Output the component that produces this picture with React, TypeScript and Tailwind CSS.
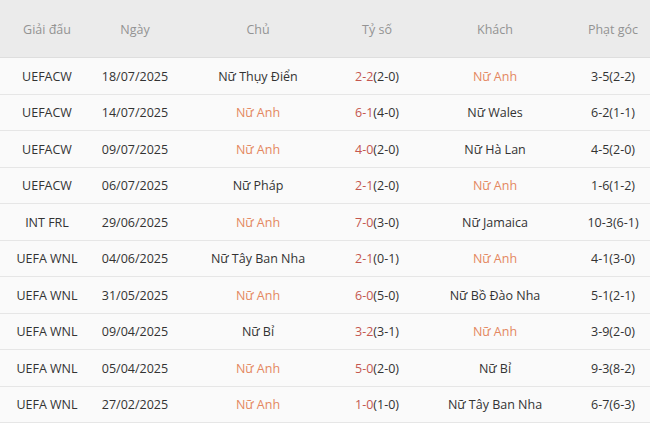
const rows = [
  { league: 'UEFACW', date: '18/07/2025', home: 'Nữ Thụy Điển', ft: '2-2', ht: '(2-0)', away: 'Nữ Anh', corner: '3-5(2-2)' },
  { league: 'UEFACW', date: '14/07/2025', home: 'Nữ Anh', ft: '6-1', ht: '(4-0)', away: 'Nữ Wales', corner: '6-2(1-1)' },
  { league: 'UEFACW', date: '09/07/2025', home: 'Nữ Anh', ft: '4-0', ht: '(2-0)', away: 'Nữ Hà Lan', corner: '4-5(2-0)' },
  { league: 'UEFACW', date: '06/07/2025', home: 'Nữ Pháp', ft: '2-1', ht: '(2-0)', away: 'Nữ Anh', corner: '1-6(1-2)' },
  { league: 'INT FRL', date: '29/06/2025', home: 'Nữ Anh', ft: '7-0', ht: '(3-0)', away: 'Nữ Jamaica', corner: '10-3(6-1)' },
  { league: 'UEFA WNL', date: '04/06/2025', home: 'Nữ Tây Ban Nha', ft: '2-1', ht: '(0-1)', away: 'Nữ Anh', corner: '4-1(3-0)' },
  { league: 'UEFA WNL', date: '31/05/2025', home: 'Nữ Anh', ft: '6-0', ht: '(5-0)', away: 'Nữ Bồ Đào Nha', corner: '5-1(2-1)' },
  { league: 'UEFA WNL', date: '09/04/2025', home: 'Nữ Bỉ', ft: '3-2', ht: '(3-1)', away: 'Nữ Anh', corner: '3-9(2-0)' },
  { league: 'UEFA WNL', date: '05/04/2025', home: 'Nữ Anh', ft: '5-0', ht: '(2-0)', away: 'Nữ Bỉ', corner: '9-3(8-2)' },
  { league: 'UEFA WNL', date: '27/02/2025', home: 'Nữ Anh', ft: '1-0', ht: '(1-0)', away: 'Nữ Tây Ban Nha', corner: '6-7(6-3)' },
]

function Team({ name }: { name: string }) {
  return <span className={name === 'Nữ Anh' ? 'text-[#e4875f]' : 'text-[#333]'}>{name}</span>
}

export default function App() {
  return (
    <div className="h-[428px] w-[650px] bg-white text-[12.5px] font-['Open_Sans',sans-serif]">
      <div className="flex h-[58px] items-center border-b border-[#dedede] bg-[#ebebeb] pt-[3px] text-[#939393]">
        <div className="w-[94px] text-center">Giải đấu</div>
        <div className="w-[82px] text-center">Ngày</div>
        <div className="w-[164px] text-center">Chủ</div>
        <div className="w-[74px] text-center">Tỷ số</div>
        <div className="w-[162px] text-center">Khách</div>
        <div className="w-[74px] text-center">Phạt góc</div>
      </div>
      {rows.map((r) => (
        <div key={r.date} className="flex h-[36.5px] items-center border-b border-[#e6e6e6] bg-[#fafafa] pt-[3px] text-[#333]">
          <div className="w-[94px] text-center">{r.league}</div>
          <div className="w-[82px] text-center">{r.date}</div>
          <div className="w-[164px] text-center"><Team name={r.home} /></div>
          <div className="w-[74px] text-center">
            <span className="text-[#c4574f]">{r.ft}</span>
            {r.ht}
          </div>
          <div className="w-[162px] text-center"><Team name={r.away} /></div>
          <div className="w-[74px] text-center">{r.corner}</div>
        </div>
      ))}
    </div>
  )
}
